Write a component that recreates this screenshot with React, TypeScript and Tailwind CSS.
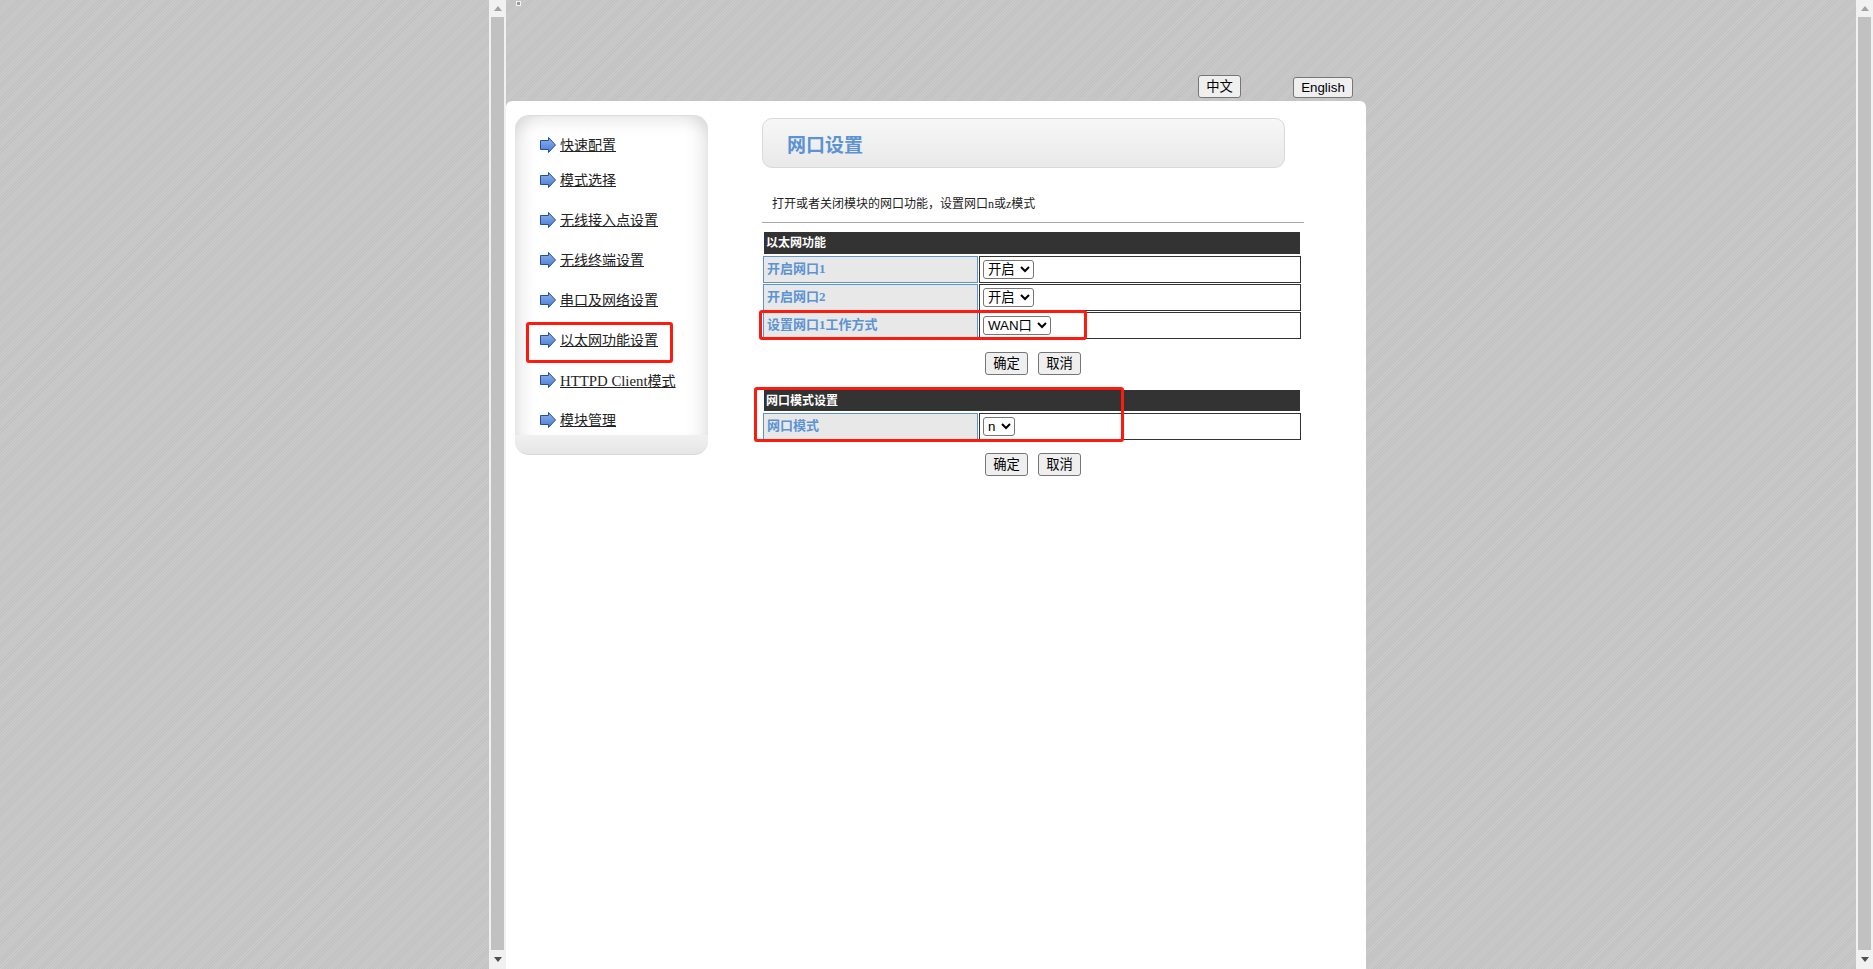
const texture =
  "bg-[#c6c6c6] bg-[repeating-linear-gradient(135deg,#c2c2c2_0px,#c2c2c2_1px,#cacaca_1px,#cacaca_2px)]";

const navItems = [
  { label: "快速配置", mt: "mt-[21px]" },
  { label: "模式选择", mt: "mt-[19px]" },
  { label: "无线接入点设置", mt: "mt-[24px]" },
  { label: "无线终端设置", mt: "mt-[24px]" },
  { label: "串口及网络设置", mt: "mt-[24px]" },
  { label: "以太网功能设置", mt: "mt-[24px]" },
  { label: "模式", latin: "HTTPD Client", mt: "mt-[24px]" },
  { label: "模块管理", mt: "mt-[24px]" },
];

function Scrollbar() {
  return (
    <div className="flex h-full w-[17px] shrink-0 flex-col bg-[#f1f1f1]">
      <div className="flex h-[17px] items-center justify-center">
        <svg width="8" height="5" viewBox="0 0 8 5">
          <path d="M4 0 L8 5 H0 Z" fill="#a3a3a3" />
        </svg>
      </div>
      <div className="mx-[2px] flex-1 bg-[#c1c1c1]" />
      <div className="flex h-[19px] items-center justify-center">
        <svg width="8" height="5" viewBox="0 0 8 5">
          <path d="M0 0 H8 L4 5 Z" fill="#505050" />
        </svg>
      </div>
    </div>
  );
}

function Arrow() {
  return (
    <svg width="16" height="16" viewBox="0 0 16 16" className="shrink-0">
      <defs>
        <linearGradient id="navArrow" x1="0" y1="0" x2="0" y2="1">
          <stop offset="0" stopColor="#8fb2ea" />
          <stop offset="1" stopColor="#4a7ad2" />
        </linearGradient>
      </defs>
      <path
        d="M0.5 3.5 H8.5 V0.5 L15.5 8 L8.5 15.5 V12.5 H0.5 Z"
        fill="url(#navArrow)"
        stroke="#1f4ea6"
        strokeWidth="1"
      />
    </svg>
  );
}

function PageButton({ children }: { children: string }) {
  return (
    <button className="h-[23px] w-[43px] rounded-[3px] border border-[#767676] bg-[#efefef] text-[13.33px] text-black">
      {children}
    </button>
  );
}

function Select({ width, options }: { width: string; options: string[] }) {
  return (
    <select
      className={`h-[19px] rounded-[3px] border border-[#767676] bg-white font-['Liberation_Sans','Noto_Sans_CJK_SC',sans-serif] text-[13.33px] font-normal text-black ${width}`}
    >
      {options.map((o) => (
        <option key={o}>{o}</option>
      ))}
    </select>
  );
}

function Row({
  label,
  width,
  options,
}: {
  label: string;
  width: string;
  options: string[];
}) {
  return (
    <div className="ml-px flex h-[27px] gap-px">
      <div className="flex w-[215px] items-center border border-[#5b93d3] bg-[#e8e8e8] pb-[2px] pl-[3px] text-[13px] font-bold text-[#5b93d3]">
        {label}
      </div>
      <div className="flex w-[322px] items-center border border-[#333333] bg-white pl-[3px]">
        <Select width={width} options={options} />
      </div>
    </div>
  );
}

function SectionHead({ title, height }: { title: string; height: string }) {
  return (
    <div
      className={`ml-[2px] flex w-[536px] items-center bg-[#333333] pl-[2px] text-xs font-bold text-white ${height}`}
    >
      {title}
    </div>
  );
}

function ButtonRow() {
  return (
    <div className="mt-[13px] ml-[223px] flex gap-[10px] font-['Liberation_Sans','Noto_Sans_CJK_SC',sans-serif]">
      <PageButton>确定</PageButton>
      <PageButton>取消</PageButton>
    </div>
  );
}

export default function App() {
  return (
    <div
      className={`flex h-screen overflow-hidden ${texture} font-['Liberation_Serif','Noto_Sans_CJK_SC',serif] text-black`}
    >
      <div className="w-[489px] shrink-0" />
      <Scrollbar />

      <main className="flex min-w-0 flex-1 flex-col">
        <div className="relative flex h-[101px] shrink-0 items-end pb-[3px] pl-[692px] font-['Liberation_Sans','Noto_Sans_CJK_SC',sans-serif]">
          <svg
            width="5"
            height="5"
            viewBox="0 0 5 5"
            className="absolute top-px left-[10px]"
          >
            <rect width="5" height="5" fill="#f4f4f4" />
            <rect x="1" y="1" width="3" height="3" fill="#9a9a9a" />
          </svg>
          <button className="h-[23px] w-[43px] rounded-[3px] border border-[#767676] bg-[#efefef] text-[13.33px] text-black">
            中文
          </button>
          <button className="ml-[52px] h-[21px] w-[60px] rounded-[3px] border border-[#767676] bg-[#efefef] text-[13.33px] text-black">
            English
          </button>
        </div>

        <div className="relative flex w-[860px] flex-1 rounded-t-[6px] bg-white">
          <aside className="mt-[14px] ml-[9px] w-[193px] shrink-0 self-start">
            <div className="h-[320px] overflow-hidden rounded-t-[14px] border-t border-[#dddddd] bg-white shadow-[inset_0_12px_16px_-6px_rgba(0,0,0,0.09),inset_20px_0_18px_-14px_rgba(0,0,0,0.1),inset_-20px_0_18px_-14px_rgba(0,0,0,0.1)]">
              <ul className="pl-[25px]">
                {navItems.map((item) => (
                  <li
                    key={item.label}
                    className={`flex h-4 items-center gap-[4px] ${item.mt}`}
                  >
                    <Arrow />
                    <a className="pt-[2px] text-sm leading-4 text-[#222222] underline">
                      {item.latin && (
                        <span className="text-[14.8px]">{item.latin}</span>
                      )}
                      {item.label}
                    </a>
                  </li>
                ))}
              </ul>
            </div>
            <div className="h-[20px] rounded-b-[14px] border-b border-[#d8d8d8] bg-gradient-to-b from-[#f0f0f0] to-[#e6e6e6]" />
          </aside>

          <section className="mt-[17px] ml-[54px] w-[542px] shrink-0">
            <div className="flex h-[50px] w-[523px] items-center rounded-[10px] border border-[#d9d9d9] bg-gradient-to-b from-[#f7f7f7] to-[#e9e9e9] pt-[3px] pl-[24px] font-['Noto_Sans_CJK_SC',sans-serif] text-[19px] font-bold text-[#5b93d3]">
              网口设置
            </div>
            <div className="flex h-[54px] items-center pt-[18px] pl-[10px] text-xs text-[#222222]">
              打开或者关闭模块的网口功能，设置网口n或z模式
            </div>
            <div className="h-px bg-[#aaaaaa]" />

            <div className="mt-[9px]">
              <SectionHead title="以太网功能" height="h-[22px]" />
              <div className="mt-[2px] flex flex-col gap-px">
                <Row label="开启网口1" width="w-[51px]" options={["开启", "关闭"]} />
                <Row label="开启网口2" width="w-[51px]" options={["开启", "关闭"]} />
                <Row label="设置网口1工作方式" width="w-[68px]" options={["WAN口", "LAN口"]} />
              </div>
            </div>
            <ButtonRow />

            <div className="mt-[15px]">
              <SectionHead title="网口模式设置" height="h-[21px]" />
              <div className="mt-[2px]">
                <Row label="网口模式" width="w-[32px]" options={["n", "z"]} />
              </div>
            </div>
            <ButtonRow />
          </section>

          <div className="pointer-events-none absolute top-[221px] left-[20px] h-[41px] w-[147px] rounded-[3px] border-[3px] border-[#ff1a0f]" />
          <div className="pointer-events-none absolute top-[209px] left-[253px] h-[30px] w-[328px] rounded-[3px] border-[3px] border-[#ff1a0f]" />
          <div className="pointer-events-none absolute top-[286px] left-[248px] h-[55px] w-[370px] rounded-[3px] border-[3px] border-[#ff1a0f]" />
        </div>
      </main>

      <Scrollbar />
    </div>
  );
}
